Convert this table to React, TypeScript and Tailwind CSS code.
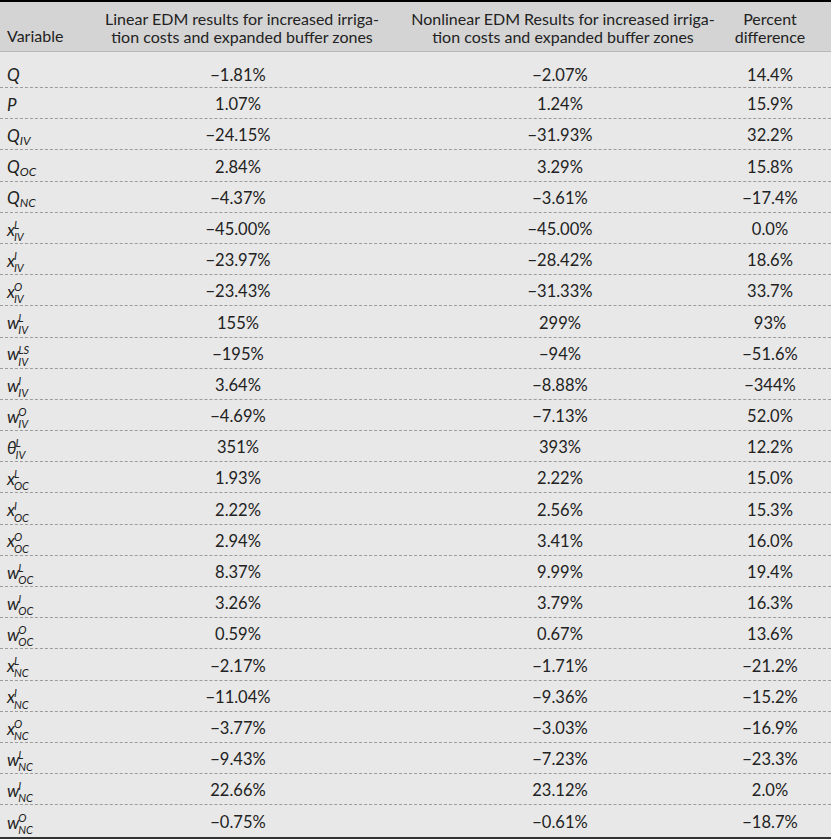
import { FC } from 'react';

type Row = {
  base: string;
  sup?: string;
  sub?: string;
  lin: string;
  non: string;
  diff: string;
};

const rows: Row[] = [
  { base: 'Q', lin: '−1.81%', non: '−2.07%', diff: '14.4%' },
  { base: 'P', lin: '1.07%', non: '1.24%', diff: '15.9%' },
  { base: 'Q', sub: 'IV', lin: '−24.15%', non: '−31.93%', diff: '32.2%' },
  { base: 'Q', sub: 'OC', lin: '2.84%', non: '3.29%', diff: '15.8%' },
  { base: 'Q', sub: 'NC', lin: '−4.37%', non: '−3.61%', diff: '−17.4%' },
  { base: 'x', sup: 'L', sub: 'IV', lin: '−45.00%', non: '−45.00%', diff: '0.0%' },
  { base: 'x', sup: 'I', sub: 'IV', lin: '−23.97%', non: '−28.42%', diff: '18.6%' },
  { base: 'x', sup: 'O', sub: 'IV', lin: '−23.43%', non: '−31.33%', diff: '33.7%' },
  { base: 'w', sup: 'L', sub: 'IV', lin: '155%', non: '299%', diff: '93%' },
  { base: 'w', sup: 'LS', sub: 'IV', lin: '−195%', non: '−94%', diff: '−51.6%' },
  { base: 'w', sup: 'I', sub: 'IV', lin: '3.64%', non: '−8.88%', diff: '−344%' },
  { base: 'w', sup: 'O', sub: 'IV', lin: '−4.69%', non: '−7.13%', diff: '52.0%' },
  { base: 'θ', sup: 'L', sub: 'IV', lin: '351%', non: '393%', diff: '12.2%' },
  { base: 'x', sup: 'L', sub: 'OC', lin: '1.93%', non: '2.22%', diff: '15.0%' },
  { base: 'x', sup: 'I', sub: 'OC', lin: '2.22%', non: '2.56%', diff: '15.3%' },
  { base: 'x', sup: 'O', sub: 'OC', lin: '2.94%', non: '3.41%', diff: '16.0%' },
  { base: 'w', sup: 'L', sub: 'OC', lin: '8.37%', non: '9.99%', diff: '19.4%' },
  { base: 'w', sup: 'I', sub: 'OC', lin: '3.26%', non: '3.79%', diff: '16.3%' },
  { base: 'w', sup: 'O', sub: 'OC', lin: '0.59%', non: '0.67%', diff: '13.6%' },
  { base: 'x', sup: 'L', sub: 'NC', lin: '−2.17%', non: '−1.71%', diff: '−21.2%' },
  { base: 'x', sup: 'I', sub: 'NC', lin: '−11.04%', non: '−9.36%', diff: '−15.2%' },
  { base: 'x', sup: 'O', sub: 'NC', lin: '−3.77%', non: '−3.03%', diff: '−16.9%' },
  { base: 'w', sup: 'L', sub: 'NC', lin: '−9.43%', non: '−7.23%', diff: '−23.3%' },
  { base: 'w', sup: 'I', sub: 'NC', lin: '22.66%', non: '23.12%', diff: '2.0%' },
  { base: 'w', sup: 'O', sub: 'NC', lin: '−0.75%', non: '−0.61%', diff: '−18.7%' },
];

const Sym: FC<{ row: Row }> = ({ row }) => {
  if (row.sup) {
    return (
      <span className="inline-flex items-center italic">
        <span className="text-[17px]">{row.base}</span>
        <span className="inline-flex flex-col text-[11px] leading-[12px] -ml-[1px] mt-[3px]">
          <span>{row.sup}</span>
          <span>{row.sub}</span>
        </span>
      </span>
    );
  }
  return (
    <span className="italic">
      <span className="text-[17px]">{row.base}</span>
      {row.sub && <span className="text-[12px] relative top-[3px]">{row.sub}</span>}
    </span>
  );
};

const grid = 'grid grid-cols-[112px_260px_368px_91px]';

export default function App() {
  return (
    <div className="w-[831px] bg-white text-[#222] font-['Lato',sans-serif] text-[16px]">
      <div className="border-t-2 border-b-2 border-t-black border-b-[#333]">
        <div className={`${grid} h-[50px] bg-[#d4d4d4] border-b border-[#b8b8b8] leading-[18px] whitespace-nowrap`}>
          <div className="pl-[7px] flex items-end pb-[6px]">Variable</div>
          <div className="flex items-center justify-center text-center pt-[3px]">
            Linear EDM results for increased irriga-
            <br />
            tion costs and expanded buffer zones
          </div>
          <div className="flex items-center justify-center text-center pl-[14px] pt-[3px]">
            Nonlinear EDM Results for increased irriga-
            <br />
            tion costs and expanded buffer zones
          </div>
          <div className="flex items-center justify-center text-center pr-[31px] pt-[3px]">
            Percent
            <br />
            difference
          </div>
        </div>
        <div className="bg-[#e8e8e8] text-[16.5px]">
          {rows.map((r, i) => (
            <div
              key={i}
              className={`${grid} ${i === 0 ? 'h-[36px] pt-[10px]' : 'h-[31.2px] pt-[3px]'} ${
                i < rows.length - 1 ? 'border-b border-dashed border-[#9c9c9c]' : ''
              }`}
            >
              <div className="pl-[7px] flex items-center">
                <Sym row={r} />
              </div>
              <div className="flex items-center justify-center pr-[8px]">{r.lin}</div>
              <div className="flex items-center justify-center pl-[8px]">{r.non}</div>
              <div className="flex items-center justify-center pr-[31px]">{r.diff}</div>
            </div>
          ))}
        </div>
      </div>
    </div>
  );
}
